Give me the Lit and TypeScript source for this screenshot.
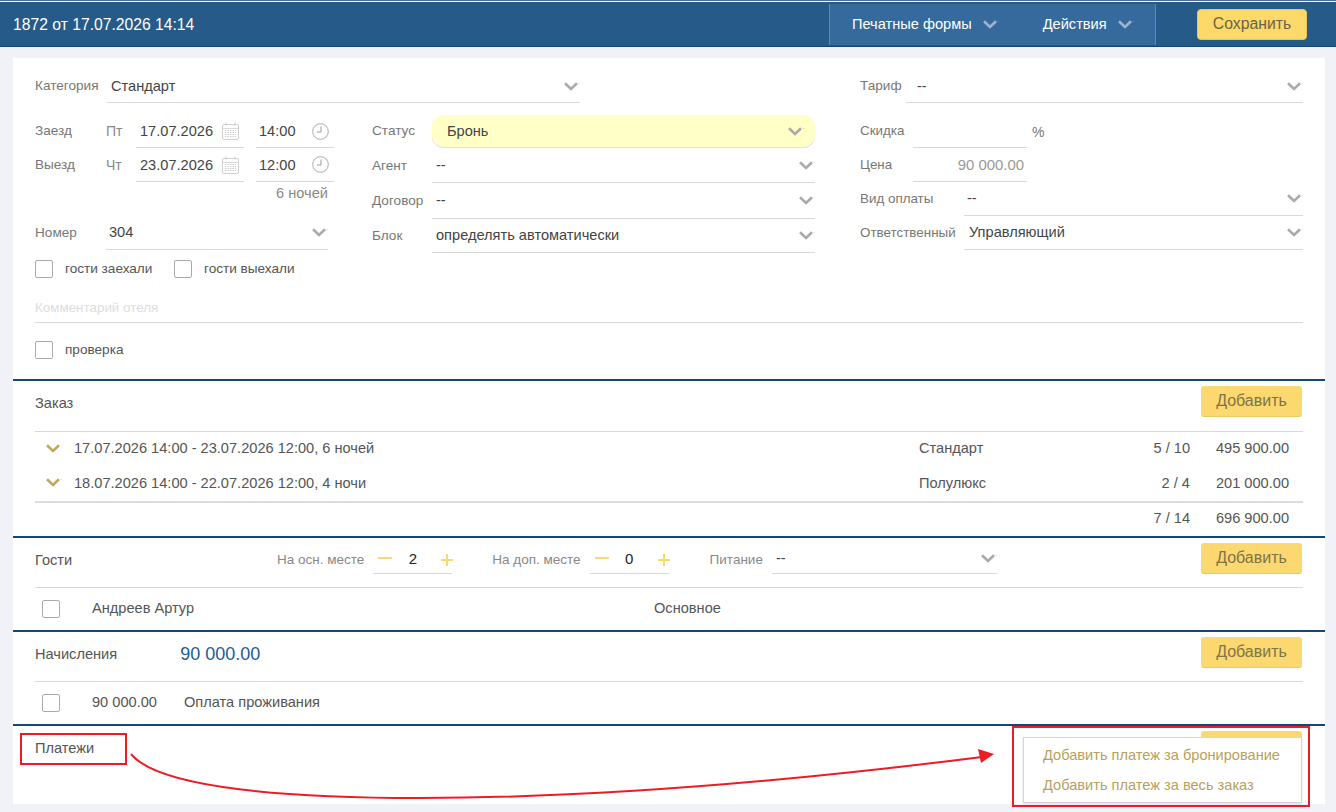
import { LitElement, html, css, svg } from 'lit';
import { customElement } from 'lit/decorators.js';

const chevron = (color = '#aaa') => html`<svg class="chev" width="16" height="9" viewBox="0 0 16 9">
  <path d="M1 1.2 L7 7 L13 1.2" fill="none" stroke=${color} stroke-width="2.6" />
  <rect x="14.6" y="1" width="1" height="1" fill=${color} opacity="0.6" />
</svg>`;

const calendar = html`<svg class="ico" width="17" height="18" viewBox="0 0 17 18">
  <rect x="0.5" y="2.5" width="16" height="15" rx="1.5" fill="#fff" stroke="#d0d0d0" />
  <path d="M4 0.5v3M13 0.5v3" stroke="#ccc" fill="none" />
  <path d="M1 6.5h15" stroke="#d8d8d8" />
  ${[8.5, 10.5, 12.5, 14.5].map(
    (y) => svg`<path d=${`M3 ${y}h11`} stroke="#cfcfcf" stroke-dasharray="1.5 1" />`,
  )}
</svg>`;

const clock = html`<svg class="ico" width="17" height="17" viewBox="0 0 17 17">
  <circle cx="8.5" cy="8.5" r="7.8" fill="#fff" stroke="#aaa" />
  <path d="M9 3.5v5.5H5" fill="none" stroke="#999" />
</svg>`;

const checkbox = html`<span class="box"></span>`;

@customElement('app-root')
export class AppRoot extends LitElement {
  static override styles = css`
    :host {
      display: block;
      width: 1336px;
      height: 812px;
      overflow: hidden;
      position: relative;
      background: #f0f2f7;
      font-family: 'Liberation Sans', Arial, sans-serif;
      font-size: 14.6px;
      color: #555;
    }
    * {
      box-sizing: border-box;
    }

    /* top bar */
    .topbar {
      height: 47px;
      background: #265a88;
      border-top: 2px solid #fff;
      box-shadow: inset 0 -1px 0 #0f4475;
      display: flex;
      align-items: center;
      color: #fff;
      position: relative;
    }
    .topbar::before {
      content: '';
      position: absolute;
      left: 0;
      right: 0;
      top: -2px;
      height: 1px;
      background: #4a6f92;
    }
    .title {
      margin-left: 13px;
      font-size: 15.7px;
      width: 816px;
    }
    .menu-bar {
      width: 327px;
      height: 41px;
      background: #366a9c;
      border-left: 1px solid #5b8ab5;
      border-right: 1px solid #5b8ab5;
      display: flex;
      align-items: center;
    }
    .menu-bar span {
      display: flex;
      align-items: center;
      gap: 11px;
      padding-bottom: 1px;
    }
    .menu-bar span:first-child {
      margin-left: 22px;
    }
    .menu-bar span:last-child {
      margin-left: 44px;
    }
    .save {
      margin-left: 41px;
      width: 110px;
      height: 31px;
      background: #fdd969;
      border: 1px solid #e9c45a;
      border-radius: 4px;
      color: #6b6346;
      font-size: 15.8px;
      padding-bottom: 1px;
      display: flex;
      align-items: center;
      justify-content: center;
    }

    /* card */
    .card {
      position: absolute;
      left: 13px;
      top: 58px;
      width: 1312px;
      height: 746px;
      background: #fff;
    }
    .form {
      padding: 0 22px;
      height: 321px;
    }
    .top-row {
      display: flex;
      height: 45px;
      align-items: flex-end;
    }
    .label {
      color: #777;
      font-size: 13.6px;
      margin-bottom: 2px;
    }
    .val {
      color: #444;
    }
    .line {
      display: flex;
      align-items: center;
      border-bottom: 1px solid #d9d9d9;
    }
    .grow {
      flex: 1;
      min-width: 0;
    }
    .line .chev {
      margin-left: auto;
    }
    .col3 {
      display: grid;
      grid-template-columns: 300px 443px 451px;
      column-gap: 37px;
    }
    .col3 > div:nth-child(3) {
      margin-left: 8px;
    }
    .col {
      padding-top: 12px;
    }
    .r {
      display: flex;
      align-items: center;
    }

    .lab-date {
      width: 71px;
    }
    .wd {
      width: 30px;
      color: #888;
      font-size: 14px;
      margin-bottom: 1px;
    }
    .date {
      width: 108px;
      padding: 0 5px 0 4px;
      justify-content: space-between;
      margin-right: 12px;
    }
    .time {
      width: 78px;
      padding: 0 5px 0 3px;
      justify-content: space-between;
    }
    .date,
    .time {
      height: 100%;
    }
    .h33 {
      height: 33px;
    }
    .h34 {
      height: 34px;
    }
    .h36 {
      height: 36px;
    }
    .nights {
      height: 23px;
      padding-right: 7px;
      text-align: right;
      color: #888;
      line-height: 22px;
    }
    .room {
      margin-top: 11px;
      padding-right: 7px;
    }
    .room .val {
      padding-bottom: 1px;
    }
    .checks {
      margin-top: 10px;
    }
    .box {
      flex: none;
      display: inline-block;
      width: 18px;
      height: 18px;
      border: 1px solid #aaa;
      border-radius: 2px;
      background: #fff;
    }
    .check-label {
      margin-left: 12px;
      font-size: 13.6px;
      padding-bottom: 2px;
    }
    .pill {
      flex: 1;
      height: 32px;
      align-self: flex-start;
      border-radius: 12px;
      background: #ffffc8;
      box-shadow: 0 1px 1px #ddd;
      display: flex;
      align-items: center;
      padding: 0 11px 0 15px;
      justify-content: space-between;
    }
    .lab-mid {
      width: 60px;
      flex: none;
    }
    .mid .line .val {
      padding: 0 0 1px 4px;
    }
    .lab-right {
      width: 53px;
      flex: none;
    }
    .right .label {
      font-size: 13.4px;
    }
    .right .line {
      height: 100%;
    }
    .right .val {
      padding-bottom: 1px;
    }
    .small-field {
      width: 114px;
      justify-content: flex-end;
      padding-right: 3px;
      color: #999;
      font-size: 14.9px;
    }
    .pct {
      margin-left: 5px;
      color: #777;
      font-size: 14px;
    }
    .lab-wide {
      width: 104px;
      flex: none;
    }
    .comment {
      margin-top: 15px;
      height: 30px;
      color: #ddd;
      font-size: 13.4px;
    }
    .verify {
      margin-top: 18px;
    }

    /* sections */
    .section {
      border-top: 2px solid #13477a;
      position: relative;
    }
    .head {
      margin: 0 22px;
      padding-top: 5px;
      border-bottom: 1px solid #d9d9d9;
      display: flex;
      align-items: flex-start;
    }
    .head .add {
      margin-left: auto;
    }
    .sec-label {
      line-height: 31px;
      margin-top: 2px;
      color: #555;
    }
    .add {
      width: 101px;
      height: 31px;
      margin-right: 1px;
      background: #fbd870;
      border-radius: 3px;
      border-bottom: 1px solid #eac963;
      color: #807447;
      font-size: 16px;
      display: flex;
      align-items: center;
      justify-content: center;
    }
    .order-head {
      height: 51px;
    }
    .order-row {
      margin: 0 22px;
      height: 34.5px;
      display: flex;
      align-items: center;
      color: #555;
      padding: 0 0 2px 11px;
    }
    .order-row .chev {
      margin-right: 12px;
    }
    .when {
      width: 845px;
    }
    .cat {
      width: 170px;
    }
    .cnt {
      width: 101px;
      text-align: right;
    }
    .sum {
      width: 99px;
      text-align: right;
    }
    .total {
      margin: 0 22px;
      border-top: 2px solid #dcdcdc;
      height: 35px;
      display: flex;
      align-items: center;
      justify-content: flex-end;
      color: #555;
      padding: 0 14px 3px 0;
    }
    .guest-head {
      height: 50px;
    }
    .g-label {
      width: 242px;
    }
    .cap {
      color: #888;
      font-size: 13.5px;
      line-height: 31px;
      margin-top: 1px;
    }
    .stepper {
      width: 79px;
      height: 31px;
      margin-left: 9px;
      border-bottom: 1px solid #d9d9d9;
      display: flex;
      align-items: center;
      justify-content: center;
      position: relative;
      color: #222;
      font-size: 15px;
    }
    .stepper .minus,
    .stepper .plus {
      position: absolute;
      background: #fbd870;
    }
    .minus {
      left: 5px;
      top: 14px;
      width: 14px;
      height: 2px;
    }
    .plus {
      left: 68px;
      top: 16px;
      width: 12px;
      height: 2px;
    }
    .plus::after {
      content: '';
      position: absolute;
      left: 5px;
      top: -5px;
      width: 2px;
      height: 12px;
      background: #fbd870;
    }
    .food {
      width: 225px;
      height: 31px;
      margin-left: 9px;
      padding: 0 0 0 4px;
      color: #444;
    }
    .row-item {
      margin: 0 22px;
      height: 42px;
      display: flex;
      align-items: center;
      padding-left: 7px;
      color: #555;
    }
    .row-item span:not(.box) {
      padding-bottom: 2px;
    }
    .row-item .box {
      margin-right: 32px;
    }
    .charge-head {
      height: 50px;
    }
    .amount {
      font-size: 18px;
      color: #1a5c94;
      line-height: 31px;
      margin: 2px 0 0 63px;
    }
    .name {
      width: 562px;
    }
    .pay-head {
      padding-top: 5px;
      margin: 0 22px;
      display: flex;
    }
    .pay-head .sec-label {
      margin-top: 2px;
    }
    .pay-head .add {
      margin-left: auto;
    }

    /* dropdown menu and annotations over the page */
    .dropdown {
      position: absolute;
      left: 1023px;
      top: 737px;
      width: 279px;
      height: 66px;
      background: #fff;
      border: 1px solid #d6d6d6;
      box-shadow: 0 1px 2px #ddd;
      color: #b79f5c;
      padding: 2px 0 0 19px;
      line-height: 30px;
    }
    .mark {
      position: absolute;
      border: 2px solid #ed1c24;
    }
    .mark-title {
      left: 20px;
      top: 733px;
      width: 107px;
      height: 32px;
    }
    .mark-menu {
      left: 1012px;
      top: 726px;
      width: 298px;
      height: 81px;
    }
    .arrow {
      position: absolute;
      left: 0;
      top: 0;
      pointer-events: none;
    }
  `;

  private stepper(value: string) {
    return html`<div class="stepper">
      <i class="minus"></i><span>${value}</span><i class="plus"></i>
    </div>`;
  }

  override render() {
    return html`
      <div class="topbar">
        <div class="title">1872 от 17.07.2026 14:14</div>
        <div class="menu-bar">
          <span>Печатные формы ${chevron('#9fb4c9')}</span>
          <span>Действия ${chevron('#9fb4c9')}</span>
        </div>
        <div class="save">Сохранить</div>
      </div>

      <div class="card">
        <div class="form">
          <div class="top-row">
            <div class="r h33" style="width:545px">
              <span class="label" style="width:72px">Категория</span>
              <div class="line grow h33"><span class="val" style="padding-left:4px">Стандарт</span>${chevron()}</div>
            </div>
            <div class="r h33" style="width:443px;margin-left:280px">
              <span class="label" style="width:46px">Тариф</span>
              <div class="line grow h33"><span class="val" style="padding-left:11px">--</span>${chevron()}</div>
            </div>
          </div>

          <div class="col3">
            <div class="col">
              <div class="r h33">
                <span class="label lab-date">Заезд</span><span class="wd">Пт</span>
                <div class="line date"><span class="val">17.07.2026</span>${calendar}</div>
                <div class="line time"><span class="val">14:00</span>${clock}</div>
              </div>
              <div class="r h34">
                <span class="label lab-date">Выезд</span><span class="wd">Чт</span>
                <div class="line date"><span class="val">23.07.2026</span>${calendar}</div>
                <div class="line time"><span class="val">12:00</span>${clock}</div>
              </div>
              <div class="nights">6 ночей</div>
              <div class="r h34 room">
                <span class="label" style="width:71px">Номер</span>
                <div class="line grow" style="height:100%"><span class="val" style="padding-left:3px">304</span>${chevron()}</div>
              </div>
              <div class="r checks">
                ${checkbox}<span class="check-label" style="width:109px">гости заехали</span>
                ${checkbox}<span class="check-label">гости выехали</span>
              </div>
            </div>

            <div class="col mid">
              <div class="r h33">
                <span class="label lab-mid">Статус</span>
                <div class="pill"><span class="val">Бронь</span>${chevron()}</div>
              </div>
              <div class="r h34" style="margin-top:1px">
                <span class="label lab-mid">Агент</span>
                <div class="line grow" style="height:100%"><span class="val">--</span>${chevron()}</div>
              </div>
              <div class="r h36">
                <span class="label lab-mid">Договор</span>
                <div class="line grow" style="height:100%"><span class="val">--</span>${chevron()}</div>
              </div>
              <div class="r h34">
                <span class="label lab-mid">Блок</span>
                <div class="line grow" style="height:100%"><span class="val">определять автоматически</span>${chevron()}</div>
              </div>
            </div>

            <div class="col right">
              <div class="r h33">
                <span class="label lab-right">Скидка</span>
                <div class="line small-field"></div><span class="pct">%</span>
              </div>
              <div class="r h34">
                <span class="label lab-right">Цена</span>
                <div class="line small-field">90 000.00</div>
              </div>
              <div class="r h34">
                <span class="label lab-wide">Вид оплаты</span>
                <div class="line grow"><span class="val" style="padding-left:3px">--</span>${chevron()}</div>
              </div>
              <div class="r h34">
                <span class="label lab-wide">Ответственный</span>
                <div class="line grow"><span class="val" style="padding-left:5px">Управляющий</span>${chevron()}</div>
              </div>
            </div>
          </div>

          <div class="line comment">Комментарий отеля</div>
          <div class="r verify">${checkbox}<span class="check-label">проверка</span></div>
        </div>

        <div class="section">
          <div class="head order-head">
            <span class="sec-label">Заказ</span>
            <div class="add">Добавить</div>
          </div>
          <div class="order-row">
            ${chevron('#c2a75c')}
            <span class="when">17.07.2026 14:00 - 23.07.2026 12:00, 6 ночей</span>
            <span class="cat">Стандарт</span><span class="cnt">5 / 10</span><span class="sum">495 900.00</span>
          </div>
          <div class="order-row">
            ${chevron('#c2a75c')}
            <span class="when">18.07.2026 14:00 - 22.07.2026 12:00, 4 ночи</span>
            <span class="cat">Полулюкс</span><span class="cnt">2 / 4</span><span class="sum">201 000.00</span>
          </div>
          <div class="total"><span>7 / 14</span><span class="sum">696 900.00</span></div>
        </div>

        <div class="section">
          <div class="head guest-head">
            <span class="sec-label g-label">Гости</span>
            <span class="cap">На осн. месте</span>
            ${this.stepper('2')}
            <span class="cap" style="margin-left:40px">На доп. месте</span>
            ${this.stepper('0')}
            <span class="cap" style="margin-left:41px">Питание</span>
            <div class="line food"><span>--</span>${chevron()}</div>
            <div class="add">Добавить</div>
          </div>
          <div class="row-item">
            ${checkbox}<span class="name">Андреев Артур</span><span>Основное</span>
          </div>
        </div>

        <div class="section">
          <div class="head charge-head">
            <span class="sec-label">Начисления</span>
            <span class="amount">90 000.00</span>
            <div class="add">Добавить</div>
          </div>
          <div class="row-item">
            ${checkbox}<span style="width:92px">90 000.00</span><span>Оплата проживания</span>
          </div>
        </div>

        <div class="section">
          <div class="pay-head">
            <span class="sec-label">Платежи</span>
            <div class="add"></div>
          </div>
        </div>
      </div>

      <div class="dropdown">
        <div>Добавить платеж за бронирование</div>
        <div>Добавить платеж за весь заказ</div>
      </div>
      <div class="mark mark-title"></div>
      <div class="mark mark-menu"></div>
      <svg class="arrow" width="1336" height="812" viewBox="0 0 1336 812">
        <path d="M131 754 C 160 790, 300 798, 420 798 C 600 798, 800 780, 982 757" fill="none" stroke="#ed1c24" stroke-width="2" />
        <path d="M978 749 L994 754 L981 763 Z" fill="#ed1c24" />
      </svg>
    `;
  }
}
